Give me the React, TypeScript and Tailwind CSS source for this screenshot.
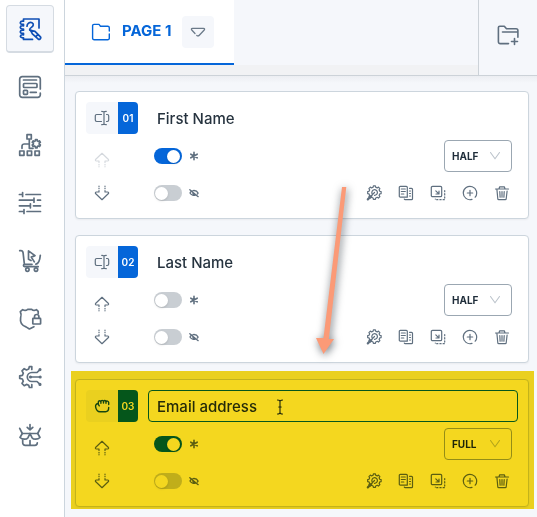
import React, { useState } from 'react';

interface FormField {
  id: string;
  name: string;
  required: boolean;
  hidden: boolean;
  width: 'half' | 'full';
}

const INITIAL_FIELDS: FormField[] = [
  { id: '01', name: 'First Name', required: true, hidden: false, width: 'half' },
  { id: '02', name: 'Last Name', required: false, hidden: false, width: 'half' },
  { id: '03', name: 'Email address', required: true, hidden: false, width: 'full' },
];

// Closed outline of a cog with n teeth
const cogPath = (cx: number, cy: number, inner: number, outer: number, n: number) => {
  const points: string[] = [];
  for (let i = 0; i < n; i++) {
    const base = (i * 2 * Math.PI) / n - Math.PI / 2;
    const step = Math.PI / n;
    [[-0.62, inner], [-0.38, outer], [0.38, outer], [0.62, inner]].forEach(([k, r]) => {
      const a = base + k * step;
      points.push(`${(cx + r * Math.cos(a)).toFixed(2)} ${(cy + r * Math.sin(a)).toFixed(2)}`);
    });
  }
  return `M${points.join('L')}Z`;
};

interface IconProps {
  size?: number;
  box?: number;
  stroke?: number;
  className?: string;
  children: React.ReactNode;
}

const Icon: React.FC<IconProps> = ({ size = 24, box = 24, stroke = 1.7, className, children }) => (
  <svg
    width={size}
    height={size}
    viewBox={`0 0 ${box} ${box}`}
    fill="none"
    stroke="currentColor"
    strokeWidth={stroke}
    strokeLinecap="round"
    strokeLinejoin="round"
    className={className}
    aria-hidden="true"
  >
    {children}
  </svg>
);

const NAV_ITEMS: { label: string; icon: React.ReactNode }[] = [
  {
    label: 'Form builder',
    icon: (
      <>
        <path d="M21 11V2H5.500v2.200C1.500 3.600 1.300 7.400 4.600 7.400h.9v1.400C1.500 8.200 1.300 12 4.600 12h.9v1.200C1.500 12.600 1.300 16.400 4.600 16.400h.9v1.400c-4-.4-4 2.800-.8 3h.8v1.600H14.500" />
        <path d="M9 9.200c0-3 3-4.400 5-3.400s1.600 3.200-.6 4.600-2.400 3.400 0 3.200" />
        <path d="M12.600 13.400l4.400 1 5.200 5.200a1.500 1.500 0 0 1-2.200 2.200l-5.600-5zM18 19.500l1.800-1.800" />
      </>
    ),
  },
  {
    label: 'Layout',
    icon: (
      <>
        <path d="M22.300 14V4.200A2.500 2.500 0 0 0 19.800 1.700H4.200A2.500 2.500 0 0 0 1.700 4.200v15.600a2.500 2.500 0 0 0 2.500 2.500h15.600a2.500 2.500 0 0 0 2.500-2.500V18" />
        <path d="M5.500 5h13M12.300 17.300h6" />
        <rect x="5.500" y="8.500" width="13.500" height="4" rx="0.800" />
        <rect x="5.500" y="15.300" width="4" height="4" rx="0.800" />
      </>
    ),
  },
  {
    label: 'Logic',
    icon: (
      <>
        <path d="M9 1.700h4.300V6H9zM1.700 18H6v4.300H1.700zM9.300 18h4.300v4.300H9.300zM17 18h4.300v4.300H17zM11.300 6v9.300H15M4 15.300v-2a2.300 2.300 0 0 1 2.300-2.300h4.500" />
        <path d={cogPath(18.3, 10.7, 3, 4.3, 6)} />
      </>
    ),
  },
  {
    label: 'Settings',
    icon: (
      <path d="M1.400 3.500h3.200M4.600 1.500v4M8 3.500h14.500M1.400 9.200H16M16 7.200v4M19.500 9.200h3M1.400 14.800h11M12.400 12.800v4M15.500 14.800h7M1.400 20.500H6M6 18.500v4M9 20.500h13.500" />
    ),
  },
  {
    label: 'Cart',
    icon: (
      <>
        <path d="M1.700 1.700h1.200c1.500 0 2 .8 2.200 2.200L6.400 15.300c-1.300.6-1.200 2.400.4 2.400h13.400M7 15.300h7M22.300 6.300c-.4 4.400-1.400 8.200-4.400 8.900" />
        <circle cx="9.400" cy="20.600" r="1.700" />
        <circle cx="18" cy="20.600" r="1.700" />
        <path d="M13 11.500L10.500 10.300V1.900l6.500 4.700-3.700 1.500 3 4.800" />
      </>
    ),
  },
  {
    label: 'Security',
    icon: (
      <>
        <path d="M20.200 6.500V4.300L18.400 2.600c-1.800 1.200-3.400 1-4.700-.3h-4c-1.500 1.300-3.200 1.500-5 .3L2.300 4.700c1.300 2.200 1 4.200.3 6.300-.8 4.800 2 7.700 5.400 8.900L11.400 22l4.500-2.300" />
        <rect x="14.800" y="11.400" width="7.800" height="5.600" rx="0.500" />
        <path d="M16.500 11.200V9.700a2.200 2.200 0 0 1 4.400 0v1.500" />
      </>
    ),
  },
  {
    label: 'Integrations',
    icon: (
      <>
        <path d="M13.800 4.500V1.600h-2.400L10.700 4 8.500 5 6.200 3.700 4 5.900l1.300 2.300-.9 2.100-2.700.5v2.600l2.700.6.9 2.200L4 18.500l2.200 2.200 2.300-1.300 2.200.9.700 2.200h2.400v-2.900" />
        <path d="M22 4.700l-3 2.800h-5.200a4.500 4.500 0 0 0 0 9H19l3 2.800M12.500 12H22" />
        <g fill="currentColor">
          <circle cx="22" cy="4.600" r="0.700" />
          <circle cx="22.200" cy="12" r="0.700" />
          <circle cx="22" cy="19.400" r="0.700" />
          <circle cx="12.500" cy="12" r="0.700" />
        </g>
      </>
    ),
  },
  {
    label: 'Export',
    icon: (
      <>
        <path d="M12 1.500v5.300M9.200 4.300L12 6.900l2.800-2.600M1.700 5.300l2.600 5.200h15.400l2.600-5.200" />
        <path d="M4.300 10.500l-2.300 4c2.300 2.300 6.500 2.200 8 .2l2-4.200 2 4.200c1.500 2 5.700 2.100 8-.2l-2.300-4" />
        <path d="M4.700 17v2.800a2.500 2.500 0 0 0 2.500 2.500h9.600c1.700 0 2.500-1 2.500-2.500M12 17.500v4.500" />
      </>
    ),
  },
];

const Sidebar: React.FC = () => (
  <nav className="w-[65px] shrink-0 border-r border-[#ccd5dd] bg-white pt-[5px] pl-[6px]" aria-label="Tools">
    <ul className="flex flex-col gap-[10px]">
      {NAV_ITEMS.map((item, i) => (
        <li key={item.label}>
          <button
            type="button"
            aria-label={item.label}
            className={`flex h-12 w-12 items-center justify-center rounded-[4px] ${
              i === 0
                ? 'border border-b-2 border-[#d5dbe2] bg-[#f5f7fb] text-[#0f4fb5]'
                : 'text-[#5f6f7f]'
            }`}
          >
            <Icon>{item.icon}</Icon>
          </button>
        </li>
      ))}
    </ul>
  </nav>
);

const PageTabs: React.FC = () => (
  <header className="flex h-19 border-b border-[#ccd2d8] bg-[#f5f7fb]">
    <div className="flex flex-1 flex-col">
      <div className="flex flex-1">
        <div className="flex items-center gap-[11px] border-b-2 border-[#0566d9] bg-white pr-5 pl-[26px]">
          <Icon size={20} box={20} stroke={1.4} className="text-[#0566d9]">
            <path d="M18.300 9V5.700a1.500 1.500 0 0 0-1.500-1.500H9.500L8 2.400H3A1.400 1.400 0 0 0 1.600 3.800v12.400a1.600 1.600 0 0 0 1.600 1.600h13.500a1.600 1.600 0 0 0 1.600-1.600V12" />
          </Icon>
          <span className="text-[15px] font-bold text-[#0566d9]">PAGE 1</span>
          <button type="button" aria-label="Page menu" className="flex h-8 w-8 items-center justify-center rounded-[4px] bg-[#f5f7fb] text-[#6b7a89]">
            <Icon size={16} box={16} stroke={1.3}>
              <path d="M5 9.500L2 6.300C1 5.100 1.300 4.300 2.500 4.300h11c1.200 0 1.500.8.500 2L9.300 11.200c-.8.900-1.600.9-2.500.2" />
            </Icon>
          </button>
        </div>
      </div>
      <div className="h-[10px] bg-[#f1f2f4]" />
    </div>
    <button type="button" aria-label="Add page" className="flex w-[59px] items-center justify-center border-l border-[#ccd2d8] text-[#5f6f7f]">
      <Icon className="mb-[6px]" stroke={1.6}>
        <path d="M12.500 20.600H4.200a1.800 1.800 0 0 1-1.800-1.800V4.600A1.400 1.400 0 0 1 3.800 3.200h4.500l2.200 2.600h9.600a1.800 1.800 0 0 1 1.800 1.800v6.600M6.500 9h15M18.500 15.500v6M15.500 18.500h6" />
      </Icon>
    </button>
  </header>
);

const FIELD_ACTIONS: { label: string; icon: React.ReactNode }[] = [
  {
    label: 'Settings',
    icon: (
      <>
        <path d={cogPath(8.4, 7.6, 5.5, 6.8, 8)} />
        <path d="M6 8.500a2.800 2.800 0 1 1 2.500 1.800M5.700 10.300L8.500 7.500" />
        <path d="M1.800 14.400l3.600-3.600" strokeWidth="2.200" />
      </>
    ),
  },
  {
    label: 'Duplicate',
    icon: (
      <>
        <path d="M9.300 12.200H2.300a1 1 0 0 1-1-1V2.300a1 1 0 0 1 1-1h6a1 1 0 0 1 1 1zM3.300 4h4M3.300 6.500h4M3.300 9h2.500" />
        <path d="M11.500 3.300h2a1 1 0 0 1 1 1v9.400a1 1 0 0 1-1 1H7.300a1 1 0 0 1-1-.7M11.500 6h1M11.500 8.500h1M11.500 11h1" />
      </>
    ),
  },
  {
    label: 'Move',
    icon: (
      <>
        <rect x="1.300" y="1.300" width="10.400" height="10.400" rx="1.300" />
        <path d="M5.800 5.800l3 3M9 6v3H6" />
        <path d="M14.700 5.500v9.200H5.300V14" strokeDasharray="1.200 2" />
      </>
    ),
  },
  {
    label: 'Add',
    icon: <path d="M13.200 12.200A6.700 6.700 0 1 0 10 14.400M8 5.300v5.400M5.300 8h5.400" />,
  },
  {
    label: 'Delete',
    icon: (
      <path d="M1.500 4h13M5 3.800l.7-2h4.600l.7 2M2.900 4.300l.9 9.400a1 1 0 0 0 1 1h6.400a1 1 0 0 0 1-1l.9-7.700M5.800 6.500l.3 5.700M8 6.500v5.700M10.200 6.500l-.3 5.700" />
    ),
  },
];

interface ToggleProps {
  id: string;
  label: string;
  checked: boolean;
  onChange: (checked: boolean) => void;
  children: React.ReactNode;
}

const Toggle: React.FC<ToggleProps> = ({ id, label, checked, onChange, children }) => (
  <div className="flex items-center gap-1">
    <input
      id={id}
      type="checkbox"
      checked={checked}
      onChange={e => onChange(e.target.checked)}
      className="flex h-4 w-7 appearance-none items-center rounded-full bg-[#c9ced3] pl-px before:h-[13px] before:w-[13px] before:rounded-full before:bg-white before:shadow checked:bg-[#0566d9] checked:pl-[13px]"
    />
    <label htmlFor={id} aria-label={label} className="flex h-4 w-4 items-center justify-center text-[#5f6f7f]">
      {children}
    </label>
  </div>
);

interface FieldCardProps {
  field: FormField;
  first: boolean;
  active: boolean;
  onChange: (patch: Partial<FormField>) => void;
}

const FieldCard: React.FC<FieldCardProps> = ({ field, first, active, onChange }) => (
  <li className="relative flex gap-[10px] rounded-[4px] border border-[#ccd5dd] bg-white px-[10px] pt-[10px] pb-[9px] shadow-xs">
    <div className="flex w-[52px] shrink-0 flex-col text-[#5f6f7f]">
      <div className="mb-[10px] flex h-8 overflow-hidden rounded-[4px] bg-[#f5f7fb]">
        <span className="flex w-8 items-center justify-center">
          {active ? (
            <Icon size={16} box={16} stroke={1.4} className="text-[#16527a]">
              <path d="M5.300 7.800L4.300 6.300V3.800c.3-1.500 2.400-1.500 2.600 0 .2-1.900 2.300-1.900 2.600-.2.300-1.600 2.300-1.300 2.500.3.400-1.300 2.600-1 2.700.7v2M4.300 5.500C2.500 5.500 1.300 7 1.600 8.800c.4 2.200 1.700 4.900 4.400 4.900h5.500c2 0 3.200-1.500 3.200-4.200M6.900 3.800v1.400M9.500 3.600V5M12 3.900v1.300" />
            </Icon>
          ) : (
            <Icon size={16} box={16} stroke={1.2}>
              <path d="M7.500 11.500H2.700A1.400 1.400 0 0 1 1.300 10.100V5.900a1.400 1.400 0 0 1 1.400-1.400h4.800M12.500 4.500h.8a1.400 1.400 0 0 1 1.400 1.400v4.200a1.400 1.400 0 0 1-1.400 1.400h-.8M10 2.300v11.400M7.700 1.300c1.500 0 2.300.3 2.300 1 0-.7.800-1 2.300-1M7.700 14.700c1.500 0 2.300-.3 2.300-1 0 .7.800 1 2.300 1" />
            </Icon>
          )}
        </span>
        <span className="flex flex-1 items-center justify-center bg-[#0566d9] text-[10px] font-semibold text-white">{field.id}</span>
      </div>
      <button type="button" aria-label="Move up" disabled={first} className="mb-px flex h-8 w-8 items-center justify-center disabled:text-[#d5d9de]">
        <Icon size={16} box={16} stroke={1.2}>
          <path d="M5 9H2.500C1.300 9 1 8 1.800 7.200L8 1.300l6.200 5.900C15 8 14.700 9 13.500 9H11v1.500M5 9v1.500" />
          <path d="M5 12.300v2.500M11 12.300v2.500" strokeDasharray="0.600 1.600" />
        </Icon>
      </button>
      <button type="button" aria-label="Move down" className="flex h-8 w-8 items-center justify-center">
        <Icon size={16} box={16} stroke={1.2}>
          <path d="M5 7H2.500C1.300 7 1 8 1.800 8.800L8 14.700l6.200-5.900C15 8 14.700 7 13.500 7H11V5.500M5 7V5.500" />
          <path d="M5 3.700V1.200M11 3.700V1.200" strokeDasharray="0.600 1.600" />
        </Icon>
      </button>
    </div>

    <div className="min-w-0 flex-1">
      <input
        type="text"
        aria-label="Field name"
        value={field.name}
        onChange={e => onChange({ name: e.target.value })}
        className={`block h-8 w-full rounded-[4px] border px-2 text-[15px] font-medium text-[#26333f] outline-none ${
          active ? 'border-[#0566d9]' : 'border-transparent'
        }`}
      />
      <div className="mt-[6px] flex h-8 items-center justify-between px-[6px]">
        <Toggle id={`required-${field.id}`} label="Required" checked={field.required} onChange={required => onChange({ required })}>
          <Icon size={10} box={10} stroke={1.6}>
            <path d="M5 1.300v7.400M1.800 3.200l6.400 3.600M8.200 3.200L1.800 6.800" />
          </Icon>
        </Toggle>
        <div className="relative">
          <select
            aria-label="Field width"
            value={field.width}
            onChange={e => onChange({ width: e.target.value as FormField['width'] })}
            className="h-8 w-17 appearance-none rounded-[4px] border border-[#9ba7b2] bg-transparent pl-[7px] text-[10px] font-bold text-[#1f2d3a]"
          >
            <option value="half">HALF</option>
            <option value="full">FULL</option>
          </select>
          <Icon size={12} box={12} stroke={1.1} className="pointer-events-none absolute top-[10px] right-[11px] text-[#bcc4cc]">
            <path d="M1.500 2.500L6 8.800l4.500-6.300" />
          </Icon>
        </div>
      </div>
      <div className="mt-[5px] flex h-8 items-center justify-between pl-[6px]">
        <Toggle id={`hidden-${field.id}`} label="Hidden" checked={field.hidden} onChange={hidden => onChange({ hidden })}>
          <Icon size={10} box={12} stroke={1.6}>
            <path d="M1 2l10 8.400M3.300 3.600C2.300 4.200 1.600 5 1.200 6c1.500 2.800 4.600 3.500 7 2.200M4.800 3.100C7.500 2.700 9.800 3.800 10.900 6c-.2.500-.5.900-.9 1.300M4.700 5.200c-.4 1.300.6 2.400 2 1.900" />
          </Icon>
        </Toggle>
        <div className="flex text-[#5f6f7f]">
          {FIELD_ACTIONS.map(action => (
            <button key={action.label} type="button" aria-label={action.label} className="flex h-8 w-8 items-center justify-center">
              <Icon size={16} box={16} stroke={1.2}>{action.icon}</Icon>
            </button>
          ))}
        </div>
      </div>
    </div>

    {active && (
      <>
        <Icon size={16} box={16} stroke={1.1} className="pointer-events-none absolute top-[19px] left-[196px] text-[#1f2d3a]">
          <path d="M5.500 1C7 1 8 1.600 8 2.600 8 1.600 9 1 10.500 1M8 2.600v10.800M5.500 15c1.500 0 2.500-.6 2.500-1.600 0 1 1 1.600 2.500 1.600M6.800 8h2.400" />
        </Icon>
        <div className="pointer-events-none absolute -top-[9px] -right-[6px] -bottom-[3px] -left-[5px] bg-[#f4d71f] mix-blend-multiply" />
      </>
    )}
  </li>
);

const App: React.FC = () => {
  const [fields, setFields] = useState<FormField[]>(INITIAL_FIELDS);

  const updateField = (id: string, patch: Partial<FormField>) => {
    setFields(prev => prev.map(field => (field.id === id ? { ...field, ...patch } : field)));
  };

  return (
    <div className="flex min-h-screen bg-[#f5f7fb] font-['Inter','Liberation_Sans',sans-serif]">
      <Sidebar />
      <main className="relative min-w-0 flex-1">
        <PageTabs />
        <div className="h-[7px] bg-linear-to-b from-[#eceef2] to-[#f5f7fb]" />
        <ul className="flex flex-col gap-4 pt-2 pr-2 pl-[10px]">
          {fields.map((field, i) => (
            <FieldCard
              key={field.id}
              field={field}
              first={i === 0}
              active={field.id === '03'}
              onChange={patch => updateField(field.id, patch)}
            />
          ))}
        </ul>
        <svg
          width="40"
          height="180"
          viewBox="0 0 40 180"
          className="pointer-events-none absolute top-[180px] left-[240px] overflow-visible drop-shadow-[1px_2px_4px_rgba(40,50,60,0.7)]"
          aria-hidden="true"
        >
          <path d="M37 7h4.300L23.800 159h5.200L18.500 174 11 158h7.500z" fill="#fb9a77" />
        </svg>
      </main>
    </div>
  );
};

export default App;
